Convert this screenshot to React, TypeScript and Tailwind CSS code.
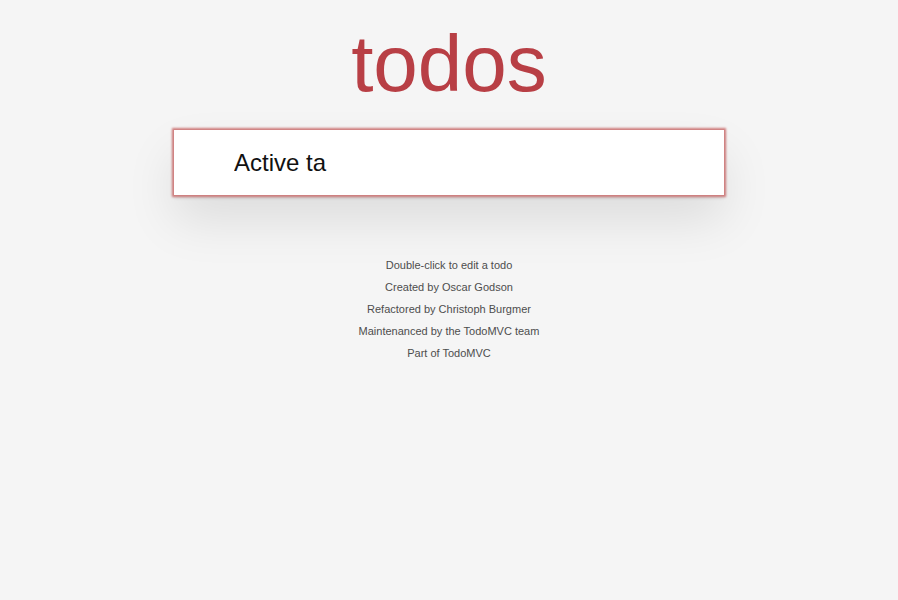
import React from "react";

export default function App() {
  const lines = [
    "Double-click to edit a todo",
    "Created by Oscar Godson",
    "Refactored by Christoph Burgmer",
    "Maintenanced by the TodoMVC team",
    "Part of TodoMVC",
  ];
  return (
    <div
      className="min-h-[600px] bg-[#f5f5f5] text-[#111111] text-[14px]"
      style={{ fontFamily: '"Liberation Sans", Arial, Helvetica, sans-serif' }}
    >
      <div className="mx-auto w-[550px] pt-[24px]">
        <h1 className="text-center text-[80px] leading-none font-normal text-[#b83f45] h-[80px] mb-[26px]">
          todos
        </h1>
        <section className="bg-white shadow-[0_2px_4px_0_rgba(0,0,0,0.2),0_25px_50px_0_rgba(0,0,0,0.1)]">
          <input
            className="block w-full h-[65px] pl-[60px] pr-4 py-4 text-[24px] leading-[1.4em] text-[#111111] bg-white outline-none shadow-[0_0_2px_2px_#cf7d7d]"
            defaultValue="Active ta"
            style={{ fontFamily: '"Liberation Sans", Arial, Helvetica, sans-serif' }}
          />
        </section>
      </div>
      <footer className="mt-[65px] text-center text-[11px] leading-none text-[#4d4d4d] flex flex-col gap-[11px]">
        {lines.map((l) => (
          <p key={l}>{l}</p>
        ))}
      </footer>
    </div>
  );
}
